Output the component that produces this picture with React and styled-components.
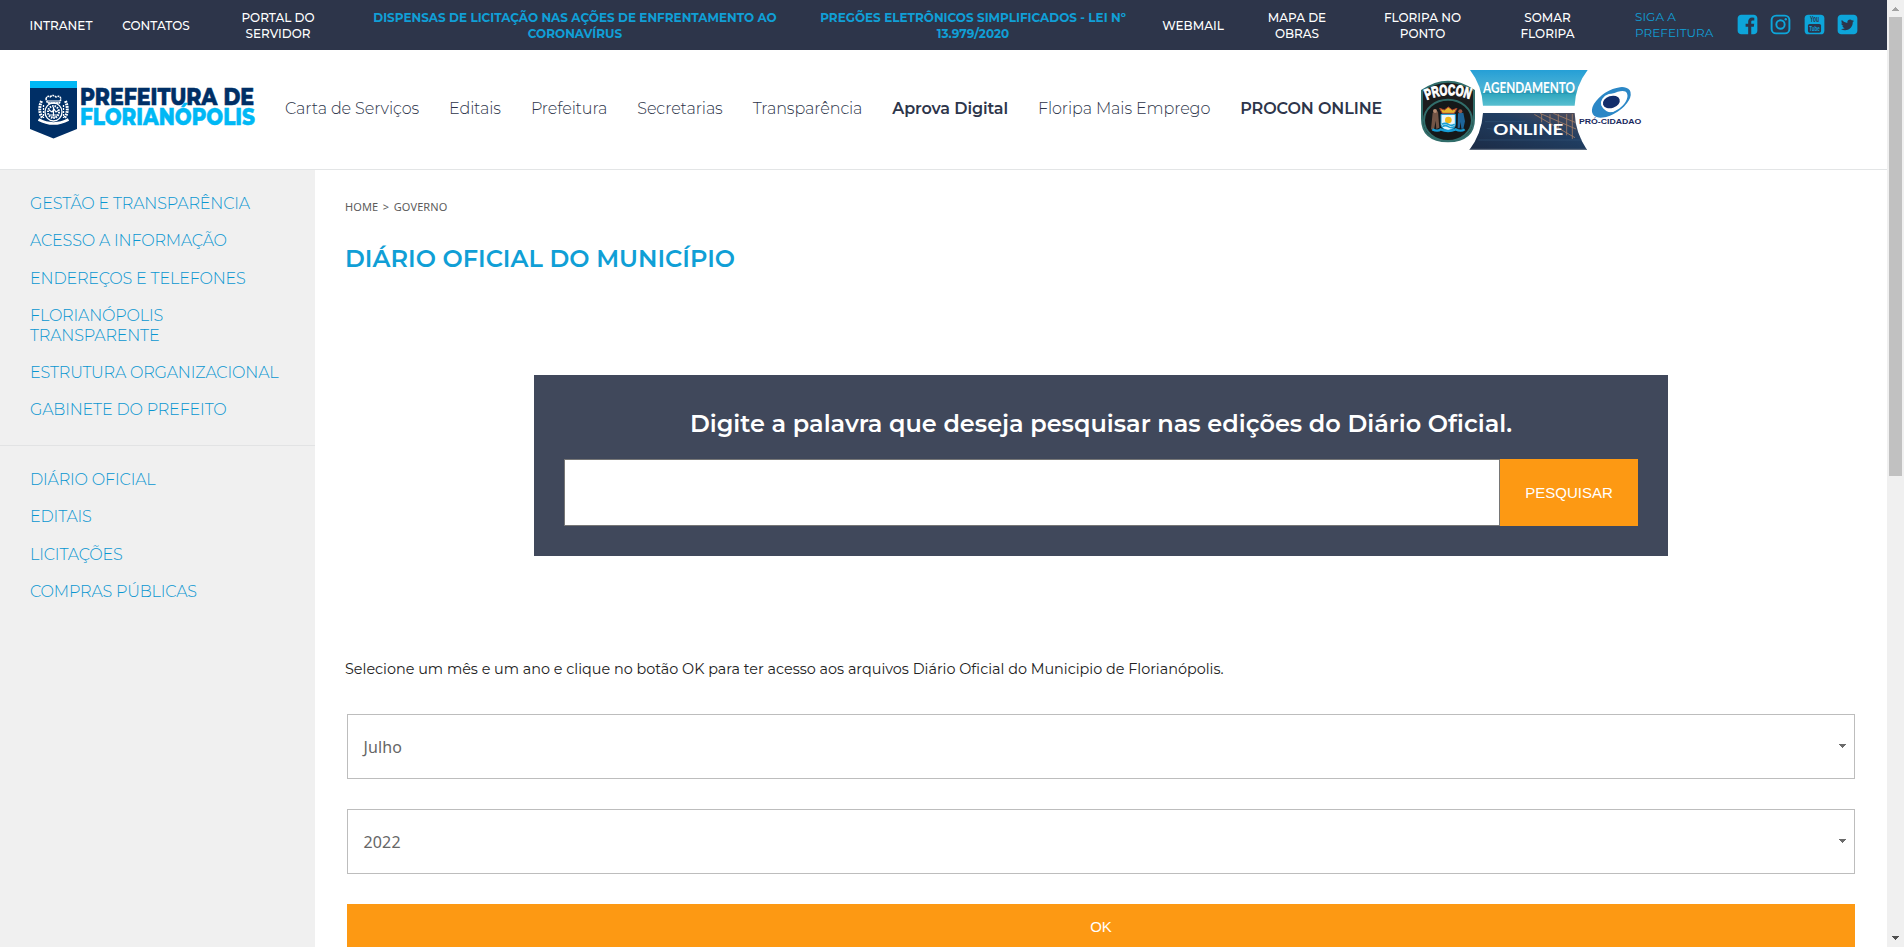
import React from 'react';
import styled, { createGlobalStyle } from 'styled-components';

const GlobalStyle = createGlobalStyle`
  * { box-sizing: border-box; }
  html, body { margin: 0; padding: 0; overflow: hidden; background: #fff; }
  body { font-family: Montserrat, Inter, "Liberation Sans", sans-serif; }
`;

const Label = styled.span`
  display: block;
  white-space: nowrap;
`;

const Window = styled.div`
  display: flex;
  width: 1904px;
  height: 947px;
  overflow: hidden;
`;
const Page = styled.div`
  width: 1887px;
  height: 947px;
  overflow: hidden;
`;

const TopBar = styled.header`
  display: flex;
  align-items: center;
  gap: 30px;
  height: 50px;
  padding-left: 30px;
  background: #2d354a;
`;
const TopLink = styled.a`
  display: flex;
  flex-direction: column;
  align-items: center;
  flex: none;
  width: ${(p) => p.$width}px;
  font-size: 12px;
  line-height: 16px;
  padding-top: 1px;
  font-weight: ${(p) => (p.$strong ? 700 : 500)};
  color: ${(p) => (p.$strong ? '#109fd6' : '#fff')};
`;
const Follow = styled.div`
  width: 79px;
  margin-left: 15px;
  padding-bottom: 1px;
  font-size: 12px;
  line-height: 16px;
  letter-spacing: 0.05px;
  color: #109fd6;
`;
const Social = styled.div`
  display: flex;
  gap: 10.4px;
  margin-left: -8px;
  padding-bottom: 2px;
  svg { width: 23px; height: 23px; display: block; }
`;

const MainBar = styled.div`
  display: flex;
  align-items: center;
  height: 120px;
  padding-left: 30px;
  border-bottom: 1px solid #e3e5e6;
`;
const Brand = styled.svg`
  width: 226px;
  height: 58px;
  flex: none;
  overflow: visible;
`;
const Nav = styled.nav`
  display: flex;
  gap: 30px;
  width: 1129px;
  margin-left: 29px;
  padding-bottom: 2px;
`;
const NavLink = styled.a`
  font-size: 16px;
  line-height: 20px;
  letter-spacing: -0.1px;
  font-weight: ${(p) => (p.$strong ? 600 : 300)};
  color: #2d354a;
`;
const Banner = styled.svg`
  width: 230px;
  height: 80px;
  flex: none;
`;

const Body = styled.div`
  display: flex;
  height: 777px;
`;
const Sidebar = styled.aside`
  width: 315px;
  flex: none;
  background: #f0f0f0;
`;
const SideGroup = styled.nav`
  display: flex;
  flex-direction: column;
  gap: 17.3px;
  height: ${(p) => p.$height}px;
  padding: ${(p) => p.$top}px 0 0 30px;
  border-bottom: ${(p) => (p.$line ? '1px solid #e2e3e4' : '0')};
`;
const SideLink = styled.a`
  font-size: 16px;
  line-height: 20px;
  letter-spacing: -0.17px;
  font-weight: 300;
  color: #0996d0;
`;

const Main = styled.main`
  flex: 1;
  padding: 29px 32px 0 30px;
`;
const Crumbs = styled.div`
  font: 11px/16px "Noto Sans", sans-serif;
  letter-spacing: 0.1px;
  word-spacing: 1.6px;
  color: #5c5c5c;
`;
const Title = styled.h1`
  margin: 29px 0 0;
  font-size: 24px;
  line-height: 30px;
  font-weight: 600;
  color: #109fd6;
`;
const SearchPanel = styled.form`
  display: flex;
  flex-direction: column;
  align-items: center;
  width: 1134px;
  height: 181px;
  margin: 101px 0 0 189px;
  padding: 34px 30px 0;
  background: #40485b;
`;
const SearchTitle = styled.h2`
  margin: 0;
  font-size: 24px;
  line-height: 30px;
  font-weight: 600;
  color: #fff;
`;
const SearchRow = styled.div`
  display: flex;
  width: 1074px;
  height: 67px;
  margin-top: 20px;
`;
const SearchInput = styled.input`
  flex: 1;
  border: 1px solid #767676;
  border-radius: 0;
  background: #fff;
`;
const Button = styled.button`
  width: ${(p) => p.$width}px;
  height: ${(p) => p.$height}px;
  flex: none;
  padding: 0 0 1px;
  border: 0;
  background: #fd9913;
  color: #fff;
  font: 15px "Liberation Sans", sans-serif;
`;
const Note = styled.p`
  margin: 103px 0 0;
  font-size: 14.4px;
  line-height: 20px;
  font-weight: 400;
  color: #222;
`;
const Fields = styled.div`
  display: flex;
  flex-direction: column;
  gap: 30px;
  margin: 35px 0 0 2px;
`;
const Field = styled.div`
  display: flex;
  align-items: center;
  justify-content: space-between;
  width: 1508px;
  height: 65px;
  padding: 0 8px 0 15.5px;
  border: 1px solid #bdbdbd;
  font: 16px "Noto Sans", sans-serif;
  letter-spacing: 0.15px;
  color: #666;
`;
const Caret = styled.svg`
  width: 7px;
  height: 4px;
  margin-bottom: 1px;
  shape-rendering: crispEdges;
`;

const Scrollbar = styled.div`
  display: flex;
  flex-direction: column;
  align-items: center;
  width: 17px;
  height: 947px;
  padding: 7px 0;
  background: #f0f0f0;
  svg { margin: 0; }
`;
const Thumb = styled.div`
  width: 13px;
  height: 459px;
  margin: 6px 0 auto;
  background: #c1c1c1;
`;

const topLinks = [
  { w: 62, lines: ['INTRANET'] },
  { w: 68, lines: ['CONTATOS'] },
  { w: 116, lines: ['PORTAL DO', 'SERVIDOR'] },
  { w: 418, strong: true, lines: ['DISPENSAS DE LICITAÇÃO NAS AÇÕES DE ENFRENTAMENTO AO', 'CORONAVÍRUS'] },
  { w: 318, strong: true, lines: ['PREGÕES ELETRÔNICOS SIMPLIFICADOS - LEI Nº', '13.979/2020'] },
  { w: 62, lines: ['WEBMAIL'] },
  { w: 86, lines: ['MAPA DE', 'OBRAS'] },
  { w: 105, lines: ['FLORIPA NO', 'PONTO'] },
  { w: 85, lines: ['SOMAR', 'FLORIPA'] },
];

const navLinks = [
  ['Carta de Serviços'],
  ['Editais'],
  ['Prefeitura'],
  ['Secretarias'],
  ['Transparência'],
  ['Aprova Digital', true],
  ['Floripa Mais Emprego'],
  ['PROCON ONLINE', true],
];

const sideTop = [
  ['GESTÃO E TRANSPARÊNCIA'],
  ['ACESSO A INFORMAÇÃO'],
  ['ENDEREÇOS E TELEFONES'],
  ['FLORIANÓPOLIS', 'TRANSPARENTE'],
  ['ESTRUTURA ORGANIZACIONAL'],
  ['GABINETE DO PREFEITO'],
];
const sideBottom = [['DIÁRIO OFICIAL'], ['EDITAIS'], ['LICITAÇÕES'], ['COMPRAS PÚBLICAS']];

const Lines = ({ lines }) => lines.map((text) => <Label key={text}>{text}</Label>);

const Down = ({ color }) => (
  <Caret viewBox="0 0 7 4"><path d="M0 0h7v1H6v1H5v1H4v1H3V3H2V2H1V1H0z" fill={color} /></Caret>
);
const Up = ({ color }) => (
  <Caret viewBox="0 0 7 4"><path d="M0 4h7V3H6V2H5V1H4V0H3v1H2v1H1v1H0z" fill={color} /></Caret>
);

const SocialIcons = () => (
  <Social>
    <svg viewBox="0 0 1792 1792" fill="#0da5da"><path d="M1376 128q119 0 203.500 84.500t84.500 203.500v960q0 119-84.500 203.500t-203.500 84.500h-188v-595h199l30-232h-229v-148q0-56 23.500-84t91.500-28l122-1v-207q-63-9-178-9-136 0-217.500 80t-81.500 226v171h-200v232h200v595h-532q-119 0-203.500-84.500t-84.500-203.500v-960q0-119 84.500-203.500t203.500-84.500h960z" /></svg>
    <svg viewBox="0 0 1792 1792" fill="none" stroke="#0da5da" strokeWidth="150">
      <rect x="203" y="203" width="1386" height="1386" rx="350" />
      <circle cx="896" cy="896" r="325" />
      <circle cx="1306" cy="486" r="92" fill="#0da5da" stroke="none" />
    </svg>
    <svg viewBox="0 0 1792 1792">
      <rect x="128" y="128" width="1536" height="1536" rx="288" fill="#0da5da" />
      <rect x="385" y="850" width="1022" height="680" rx="130" fill="#2d354a" />
      <text x="896" y="740" textAnchor="middle" textLength="700" lengthAdjust="spacingAndGlyphs" fontFamily="Liberation Sans" fontSize="680" fontWeight="700" fill="#2d354a">You</text>
      <text x="896" y="1410" textAnchor="middle" textLength="820" lengthAdjust="spacingAndGlyphs" fontFamily="Liberation Sans" fontSize="620" fontWeight="700" fill="#0da5da">Tube</text>
    </svg>
    <svg viewBox="0 0 1792 1792" fill="#0da5da"><path d="M1408 610q-56 25-121 34 68-40 93-117-65 38-134 51-61-66-153-66-87 0-148.500 61.500t-61.500 148.500q0 29 5 48-129-7-242-65t-192-155q-29 50-29 106 0 114 91 175-47-1-100-26v2q0 75 50 133.500t123 72.500q-29 8-51 8-13 0-39-4 21 63 74.500 104t121.500 42q-116 90-261 90-26 0-50-3 148 94 322 94 112 0 210-35.500t168-95 120.500-137 75-162 24.500-168.500q0-18-1-27 63-45 105-109zm256-194v960q0 119-84.500 203.500t-203.500 84.500h-960q-119 0-203.500-84.500t-84.500-203.500v-960q0-119 84.500-203.500t203.500-84.500h960q119 0 203.500 84.500t84.500 203.500z" /></svg>
  </Social>
);

const CityLogo = () => (
  <Brand viewBox="0 0 226 58">
    <path d="M0 0h47v48L23.500 57.500 0 48z" fill="#002f66" />
    <path d="M0 0h47v7H0z" fill="#00b8f5" />
    <g fill="none" stroke="#fff">
      <path d="M16 18q1-4 4-2 3-3 6 0 4-2 5 2l-1.500 4h-12z" strokeWidth="1.500" strokeDasharray="2 .7" />
      <path d="M17 20h13M18 22h11" strokeWidth="1" />
      <ellipse cx="23.500" cy="31" rx="8.500" ry="9" strokeWidth="1.300" />
      <ellipse cx="23.500" cy="31" rx="5.500" ry="6" strokeWidth="2" strokeDasharray="1.500 1" />
      <path d="M19 29l3 2 2-3 2 3 3-2M19 34h9M21 36h5M23.500 26v9" strokeWidth="1.200" />
      <path d="M11.500 20q-4 10 1 17M35.500 20q4 10-1 17" strokeWidth="3" strokeDasharray="1.800 .8" />
      <path d="M13.500 24v13M33.500 24v13" strokeWidth="1.300" strokeDasharray="2 1" />
      <path d="M8.500 38.500q15 8 30 0" strokeWidth="2.600" />
    </g>
    <g fontFamily="Montserrat, Inter, sans-serif" fontWeight="800" fontSize="23.400" strokeWidth=".5">
      <text x="50" y="24" textLength="174" lengthAdjust="spacingAndGlyphs" fill="#002f66" stroke="#002f66">PREFEITURA DE</text>
      <text x="50" y="43.700" textLength="175" lengthAdjust="spacingAndGlyphs" fill="#00b8f5" stroke="#00b8f5">FLORIANÓPOLIS</text>
    </g>
  </Brand>
);

const ServiceBanner = () => (
  <Banner viewBox="12 30 690 240">
    <defs>
      <linearGradient id="sky" x2="0" y2="1">
        <stop offset="0" stopColor="#259fd6" />
        <stop offset=".5" stopColor="#4bb2d5" />
        <stop offset=".65" stopColor="#2da5bd" />
        <stop offset="1" stopColor="#58bfd0" />
      </linearGradient>
      <linearGradient id="sea" x1="0" y1="1" x2="1" y2="0">
        <stop offset="0" stopColor="#1c2b45" />
        <stop offset=".6" stopColor="#203e62" />
        <stop offset="1" stopColor="#564f5a" />
      </linearGradient>
      <path id="badgeArc" d="M50 120q64-28 132-2" />
    </defs>
    <path d="M180 30h353q-37 48-39 107H219q-3-60-39-107z" fill="url(#sky)" />
    <path d="M221 98l30-6 20 3 32-7 25 7 35-5 22 5 35-6 30 7 45-5-2 11H220z" fill="#278fae" opacity=".55" />
    <path d="M219 159h275q2 58 37 111H178q37-49 41-111z" fill="url(#sea)" />
    <g stroke="#a77f65" strokeWidth="3" opacity=".8" fill="none">
      <path d="M373 163l122 70M390 160l108 47M430 160l65 27M395 162v25M420 163v35M445 162v47M470 162v64M487 162v75" />
    </g>
    <path d="M205 240h310M230 205l150 20M225 185h120" stroke="#34577a" strokeWidth="3" opacity=".5" />
    <path d="M180 268h350" stroke="#6b7888" strokeWidth="3" />
    <g fontFamily="Lato, sans-serif" fill="#fff">
      <text x="219" y="100" textLength="276" lengthAdjust="spacingAndGlyphs" fontWeight="700" fontSize="46">AGENDAMENTO</text>
      <text x="250" y="226" textLength="210" lengthAdjust="spacingAndGlyphs" fontWeight="700" fontSize="46">ONLINE</text>
    </g>
    <path d="M36 92q78-54 156 0v84q0 66-78 68-78-2-78-68z" fill="#1b1d1e" stroke="#316d6a" strokeWidth="6" />
    <ellipse cx="114" cy="181" rx="72" ry="62" fill="#151819" stroke="#316d6a" strokeWidth="6" />
    <text fontFamily="Liberation Sans" fontWeight="700" fontSize="45" fill="#fff" stroke="#fff" strokeWidth="3" textLength="132" lengthAdjust="spacingAndGlyphs"><textPath href="#badgeArc" textLength="132" lengthAdjust="spacingAndGlyphs">PROCON</textPath></text>
    <path d="M89 145l8 15h36l8-15-14 5-12-9-12 9z" fill="#e3b52c" stroke="#a93c2e" strokeWidth="3" />
    <path d="M93 163h43v30q0 14-21.500 19Q93 207 93 193z" fill="#e8f6fb" stroke="#139dd4" strokeWidth="3" />
    <circle cx="115" cy="180" r="10" fill="#f1b91c" />
    <path d="M96 193q10-6 19 0t19 0M97 200q9-6 18 0t17 0" fill="none" stroke="#189fd4" strokeWidth="5" />
    <path d="M68 158l16-4 4 49-9 4-2-25-5 28-9-2z" fill="#735546" />
    <circle cx="75" cy="153" r="6" fill="#b68c72" />
    <path d="M144 160l16-2 5 26-5 22h-6l-2-20-3 19h-6z" fill="#1d659a" />
    <circle cx="151" cy="154" r="6" fill="#9a5848" />
    <path d="M67 208q16 8 25 0 22 10 45 0 16 8 27 0" fill="none" stroke="#159cd4" strokeWidth="7" />
    <g transform="rotate(-33 604 127)">
      <path fillRule="evenodd" d="M538 127a66 34 0 0 1 132 0a66 34 0 0 1-132 0zM560 130a46 27 0 0 0 98-6a50 24 0 0 0-98 6z" fill="#2b87c6" />
      <path d="M552 134q10-34 58-34-34 8-36 30 2 22 28 27-38-1-50-23z" fill="#2b87c6" />
    </g>
    <ellipse cx="604" cy="126" rx="32" ry="25" transform="rotate(-18 604 126)" fill="#fff" />
    <ellipse cx="604" cy="126" rx="26" ry="18" transform="rotate(-18 604 126)" fill="#122d6b" />
    <text x="507" y="193" textLength="187" lengthAdjust="spacingAndGlyphs" fontFamily="Liberation Sans" fontWeight="700" fontSize="23" fill="#17275d">PRÓ-CIDADAO</text>
  </Banner>
);

export default function App() {
  return (
    <Window>
      <GlobalStyle />
      <Page>
        <TopBar>
          {topLinks.map((l) => (
            <TopLink key={l.lines[0]} $width={l.w} $strong={l.strong}><Lines lines={l.lines} /></TopLink>
          ))}
          <Follow><Lines lines={['SIGA A', 'PREFEITURA']} /></Follow>
          <SocialIcons />
        </TopBar>
        <MainBar>
          <CityLogo />
          <Nav>
            {navLinks.map(([text, strong]) => (
              <NavLink key={text} $strong={strong}><Label>{text}</Label></NavLink>
            ))}
          </Nav>
          <ServiceBanner />
        </MainBar>
        <Body>
          <Sidebar>
            <SideGroup $top={24} $height={276} $line>
              {sideTop.map((l) => <SideLink key={l[0]}><Lines lines={l} /></SideLink>)}
            </SideGroup>
            <SideGroup $top={24} $height={300}>
              {sideBottom.map((l) => <SideLink key={l[0]}><Lines lines={l} /></SideLink>)}
            </SideGroup>
          </Sidebar>
          <Main>
            <Crumbs>{'HOME > GOVERNO'}</Crumbs>
            <Title>DIÁRIO OFICIAL DO MUNICÍPIO</Title>
            <SearchPanel>
              <SearchTitle>Digite a palavra que deseja pesquisar nas edições do Diário Oficial.</SearchTitle>
              <SearchRow>
                <SearchInput />
                <Button type="button" $width={138} $height={67}>PESQUISAR</Button>
              </SearchRow>
            </SearchPanel>
            <Note>Selecione um mês e um ano e clique no botão OK para ter acesso aos arquivos Diário Oficial do Municipio de Florianópolis.</Note>
            <Fields>
              <Field>Julho<Down color="#6b6b6b" /></Field>
              <Field>2022<Down color="#6b6b6b" /></Field>
              <Button type="button" $width={1508} $height={45}>OK</Button>
            </Fields>
          </Main>
        </Body>
      </Page>
      <Scrollbar>
        <Up color="#a3a3a3" />
        <Thumb />
        <Down color="#505050" />
      </Scrollbar>
    </Window>
  );
}
